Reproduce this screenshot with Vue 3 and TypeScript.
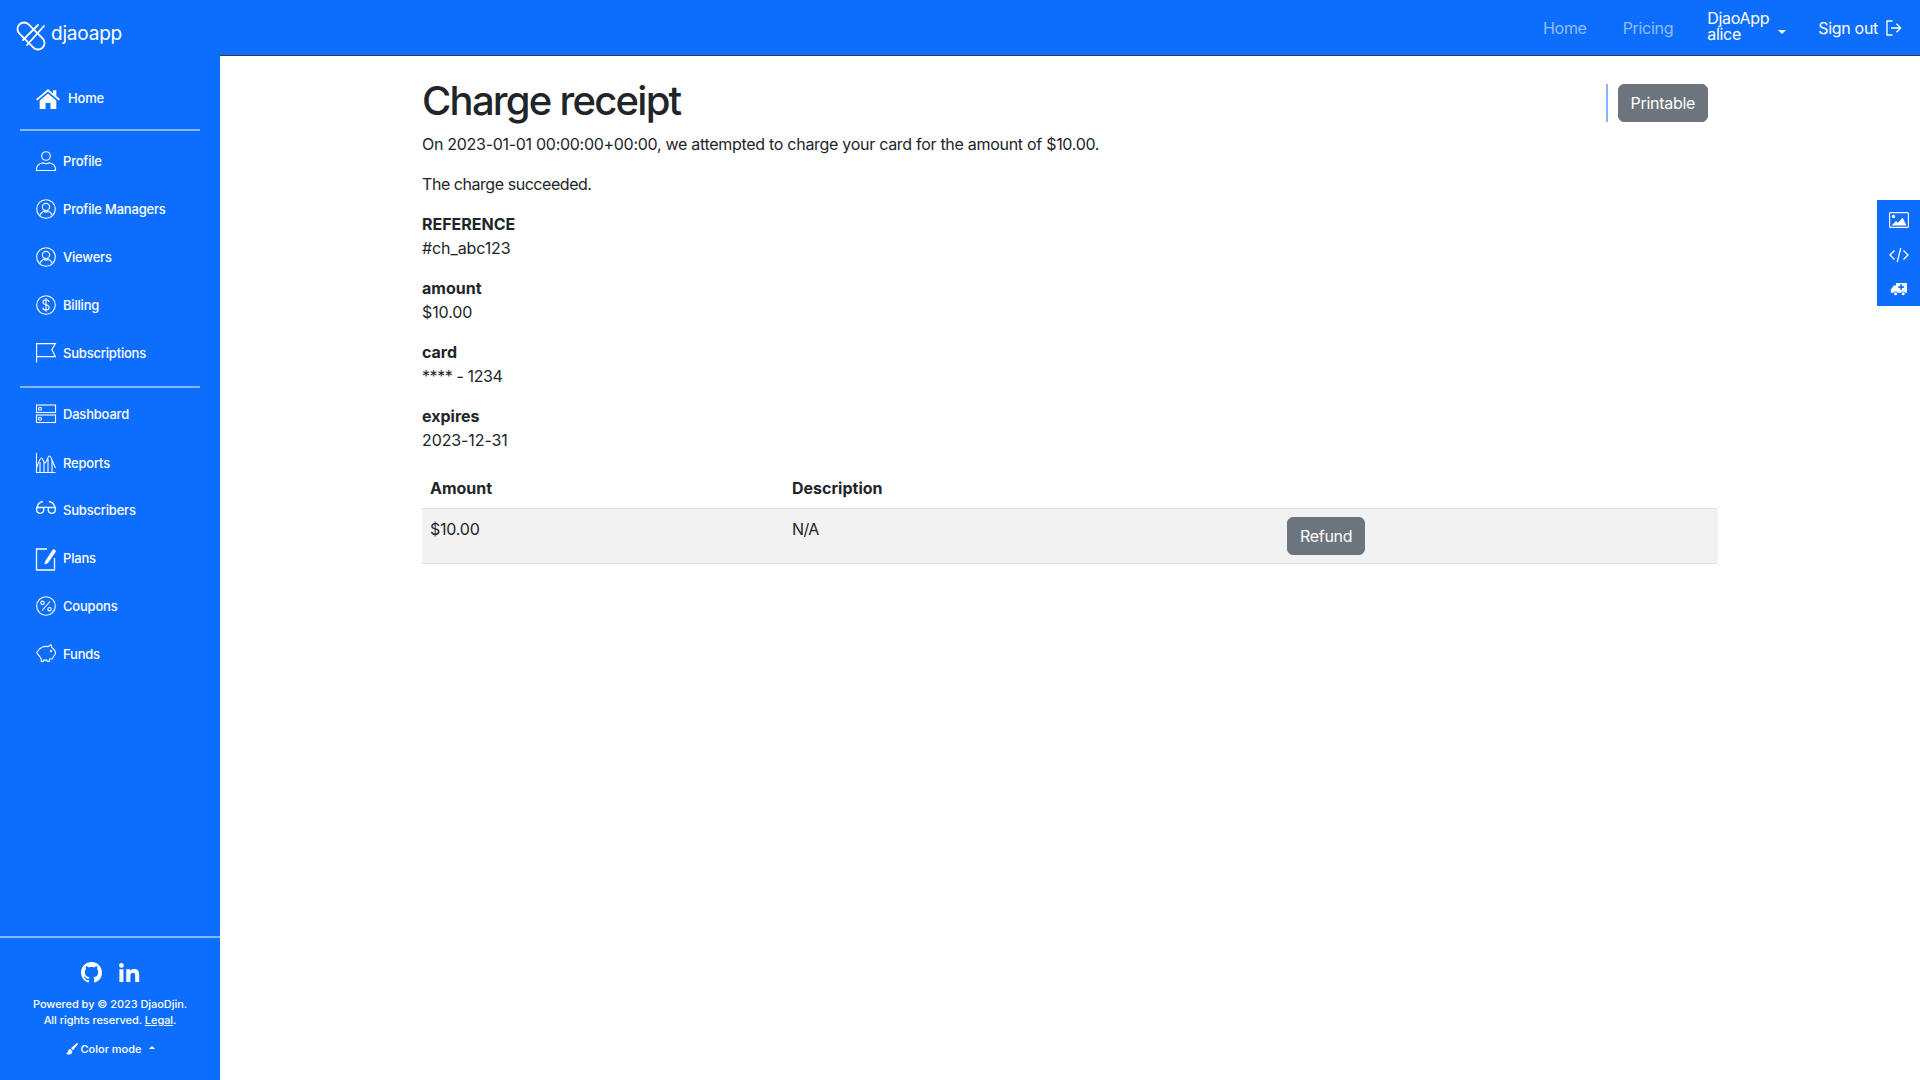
<script setup lang="ts">
interface NavItem { label: string; icon: string; cls?: string }
const primary: NavItem[] = [
  { label: 'Profile', icon: 'person' },
  { label: 'Profile Managers', icon: 'personc' },
  { label: 'Viewers', icon: 'personc' },
  { label: 'Billing', icon: 'dollar' },
  { label: 'Subscriptions', icon: 'flag' },
]
const secondary: NavItem[] = [
  { label: 'Dashboard', icon: 'hdd', cls: 'h-dash' },
  { label: 'Reports', icon: 'graph', cls: 'h-rep' },
  { label: 'Subscribers', icon: 'glasses', cls: 'h-sub' },
  { label: 'Plans', icon: 'plan' },
  { label: 'Coupons', icon: 'percent' },
  { label: 'Funds', icon: 'piggy' },
]
const details = [
  { term: 'REFERENCE', value: '#ch_abc123', cls: '' },
  { term: 'amount', value: '$10.00', cls: '' },
  { term: 'card', value: '**** - 1234', cls: 'tight' },
  { term: 'expires', value: '2023-12-31', cls: '' },
]
</script>

<template>
  <div class="app">
    <aside class="side">
      <a class="brand">
        <svg class="logo" viewBox="0 0 30 32" fill="none" stroke="#fff" stroke-width="1.800" stroke-linecap="round">
          <path d="M12.600 4.400 26.600 18.400A6.500 6.500 0 0 1 17.400 27.600L3.400 13.600A6.500 6.500 0 0 1 12.600 4.400Z"/>
          <path d="M28 6 11 25M22 5 7 20"/>
        </svg>
        <span>djaoapp</span>
      </a>
      <nav class="nav">
        <a class="item home">
          <svg class="ico-home" viewBox="0 0 24 20" fill="#fff"><path d="M12 0 0 10.200l1.200 1.400L12 2.600l10.800 9 1.200-1.400-3.700-3.100V1.200h-3.200v3.200L12 0Z"/><path d="M12 4.600 3.700 11.500V20h5.800v-6h5v6h5.800v-8.500L12 4.600Z"/></svg>
          <span>Home</span>
        </a>
        <div class="rule"></div>
        <a v-for="n in primary" :key="n.label" class="item">
          <svg class="ico" viewBox="0 0 20 20" fill="none" stroke="#fff" stroke-width="1.100">
            <template v-if="n.icon === 'person'">
              <circle cx="10" cy="5" r="4.300"/><path d="M.5 19v-1.500C1 14.500 4 12.500 6.500 11.800 8 13 12 13 13.500 11.800 16 12.500 19 14.500 19.500 17.500V19.500H.5Z"/>
            </template>
            <template v-else-if="n.icon === 'personc'">
              <circle cx="10" cy="10" r="9.300"/><circle cx="10" cy="8" r="3.600"/><path d="M3.800 16.500c.8-2.500 3-3.800 3.800-4.200 1.500 1 3.300 1 4.800 0 1 .4 3 1.700 3.800 4.200"/>
            </template>
            <template v-else-if="n.icon === 'dollar'">
              <circle cx="10" cy="10" r="9.300"/><path d="M13 7c-.2-1.500-1.400-2.200-3-2.200-1.800 0-3 1-3 2.400 0 3.300 6.200 1.900 6.200 5.300 0 1.500-1.300 2.500-3.200 2.500-1.800 0-3.100-.9-3.300-2.400M10 3.200v13.600"/>
            </template>
            <template v-else>
              <path d="M.6 19.500V.6h18.800l-3.600 6 3.600 7H.6"/>
            </template>
          </svg>
          <span>{{ n.label }}</span>
        </a>
        <div class="rule second"></div>
        <a v-for="n in secondary" :key="n.label" class="item" :class="n.cls">
          <svg class="ico" viewBox="0 0 20 20" fill="none" stroke="#fff" stroke-width="1.100">
            <template v-if="n.icon === 'hdd'">
              <rect x=".5" y="1" width="19" height="7.500"/><rect x=".5" y="11" width="19" height="7.500"/><circle cx="4" cy="4.700" r="1.500"/><circle cx="4" cy="14.700" r="1.500"/>
            </template>
            <template v-else-if="n.icon === 'graph'">
              <path d="M.5 0v19.500h19M.5 15c2-6 3.500-10 5-10 1.500 0 2 5 3.500 5s2.500-7 4.500-7 3.500 8 6 12M4 9v10M8 9v10M12 6v13M16 7v12"/>
            </template>
            <template v-else-if="n.icon === 'glasses'">
              <path d="M.8 8C1.800 4 3.500 2 7 1.500M19.200 8C18.200 4 16.500 2 13 1.500" stroke-width="1.300"/><path d="M.8 7.500h6.700c.8 4-.5 5.800-3.400 5.800S.4 11.500.8 7.500ZM19.200 7.500h-6.800c-.8 4 .6 5.800 3.500 5.800s3.700-1.800 3.300-5.800ZM7.500 8c1.500-1 3.500-1 5 0" stroke-width="1.300"/>
            </template>
            <template v-else-if="n.icon === 'plan'">
              <path d="M11 1H.5v21h18V10" stroke-width="1.300"/>
              <path d="M9 13.500 16.500 2c.7-1 1.900-.8 2.700-.1.700.6.800 1.500.2 2.300L12 15l-3.500 1.500.5-3Z" fill="#fff" stroke="none"/>
            </template>
            <template v-else-if="n.icon === 'percent'">
              <circle cx="10" cy="10" r="9.300"/><path d="M14 5.500 6 14.500"/><circle cx="6.500" cy="6.800" r="1.700"/><circle cx="13.500" cy="13.200" r="1.700"/>
            </template>
            <template v-else>
              <path d="M.6 8.500 3.500 5C6 2.500 9 2 12 2.600L15 .6l.8 3c1.800 1 3 2.600 3.600 4.400.4 1.500-.2 3-1.300 3.800L16 15h-2.500l-.3 2.500h-2l-.3-1.500c-1.300.2-2 .2-3.300 0l-.3 1.500h-2L5.300 15 3.500 12.300.6 8.500Z"/><circle cx="15" cy="7" r=".6"/>
            </template>
          </svg>
          <span>{{ n.label }}</span>
        </a>
      </nav>
      <footer class="foot">
        <div class="social">
          <svg class="gh" viewBox="0 0 16 16" fill="#fff"><path d="M8 0C3.580 0 0 3.580 0 8c0 3.540 2.290 6.530 5.470 7.590.4.070.55-.17.55-.38 0-.19-.01-.82-.01-1.490-2.010.37-2.530-.49-2.690-.94-.09-.23-.48-.94-.82-1.130-.28-.15-.68-.52-.01-.53.63-.01 1.080.58 1.230.82.72 1.210 1.870.87 2.330.66.070-.52.28-.87.51-1.070-1.780-.2-3.640-.89-3.640-3.950 0-.87.31-1.590.82-2.150-.08-.2-.36-1.020.08-2.120 0 0 .67-.21 2.200.82.64-.18 1.320-.27 2-.27.68 0 1.360.09 2 .27 1.530-1.040 2.200-.82 2.200-.82.44 1.100.16 1.920.08 2.120.51.56.82 1.270.82 2.150 0 3.070-1.870 3.750-3.650 3.950.29.25.54.73.54 1.480 0 1.070-.01 1.930-.01 2.200 0 .21.15.46.55.38A8.012 8.012 0 0 0 16 8c0-4.420-3.580-8-8-8z"/></svg>
          <svg class="li" viewBox="0 0 22 20" fill="#fff"><circle cx="2.500" cy="2.500" r="2.500"/><rect x=".4" y="6.600" width="4.200" height="13.400"/><path d="M7.600 6.600h4v1.900c.7-1.200 2.200-2.200 4.300-2.200 4.400 0 5.300 2.800 5.300 6.600V20H17v-6.300c0-1.600 0-3.500-2.200-3.500s-2.900 1.700-2.900 3.400V20H7.600V6.600Z"/></svg>
        </div>
        <p class="powered">Powered by © 2023 DjaoDjin.<br>All rights reserved. <a class="legal">Legal</a>.</p>
        <div class="mode">
          <svg class="brush" viewBox="0 0 12 12" fill="#fff"><path d="M11.800.2c-.4-.4-1-.2-1.500.2L5 5.200 7 7.200l4.500-5.500c.4-.5.600-1.100.3-1.500ZM4.300 6C2.800 6 2.200 7 2 8.200 1.800 9.500 1 10 0 10c1 1.500 3 2 4.500 1.300C6 10.500 6.500 9.300 6.300 8L4.300 6Z"/></svg>
          <span>Color mode</span>
          <i class="caret-up"></i>
        </div>
      </footer>
    </aside>

    <div class="right">
      <header class="top">
        <a class="tlink muted">Home</a>
        <a class="tlink muted">Pricing</a>
        <a class="user"><span class="who">DjaoApp<br>alice</span><i class="caret"></i></a>
        <a class="signout">
          <span>Sign out</span>
          <svg class="out" viewBox="0 0 16 16" fill="none" stroke="#fff" stroke-width="1.300"><path d="M6.500 1H1v14h5.500M5 8h9.500M10.500 3.800 14.700 8l-4.200 4.200"/></svg>
        </a>
      </header>

      <main class="main">
        <div class="actions">
          <button class="btn">Printable</button>
        </div>
        <h1>Charge receipt</h1>
        <p class="lead">On 2023-01-01 00:00:00+00:00, we attempted to charge your card for the amount of $10.00.</p>
        <p class="status">The charge succeeded.</p>
        <dl v-for="d in details" :key="d.term">
          <dt>{{ d.term }}</dt>
          <dd :class="d.cls">{{ d.value }}</dd>
        </dl>
        <table>
          <colgroup><col class="c1"><col class="c2"><col></colgroup>
          <thead><tr><th>Amount</th><th>Description</th><th></th></tr></thead>
          <tbody><tr><td>$10.00</td><td class="na">N/A</td><td><button class="btn">Refund</button></td></tr></tbody>
        </table>
      </main>
    </div>

    <div class="dock">
      <svg viewBox="0 0 20 16" fill="none" stroke="#fff" stroke-width="1.100"><rect x=".6" y=".6" width="18.800" height="14.800" rx="1"/><circle cx="4.500" cy="4.500" r="1.700" fill="#fff" stroke="none"/><path d="M2.500 13.500 7 9l2 1.800 4.500-5.300 4 8Z" fill="#fff" stroke="none"/></svg>
      <svg viewBox="0 0 20 16" fill="none" stroke="#fff" stroke-width="1.300"><path d="M5.500 3.500 1 8l4.500 4.500M14.500 3.500 19 8l-4.500 4.500M11.800 1 8.200 15"/></svg>
      <svg class="amb" viewBox="0 0 20 16" fill="#fff"><path d="M7 1h12a1 1 0 0 1 1 1v10.500h-2.200a2.500 2.500 0 0 0-4.600 0H8.800a2.500 2.500 0 0 0-4.600 0H1V8.500L4.500 4H7V1Zm5 1.500v2.200H9.800v2.100H12V9h2.100V6.800h2.200V4.700h-2.200V2.500H12Z" fill-rule="evenodd"/><circle cx="6.500" cy="13.500" r="1.800"/><circle cx="15.500" cy="13.500" r="1.800"/></svg>
    </div>
  </div>
</template>

<style scoped>
.app {
  display: flex;
  height: 1080px;
  overflow: hidden;
  font-family: Inter, "Liberation Sans", sans-serif;
  font-size: 16px;
  line-height: 24px;
  color: #212529;
  background: #fff;
  position: relative;
}
.side {
  width: 220px;
  flex: none;
  background: #0d6efd;
  color: #fff;
  display: flex;
  flex-direction: column;
}
.brand {
  height: 56px;
  flex: none;
  box-sizing: border-box;
  display: flex;
  align-items: center;
  gap: 5px;
  padding: 12px 0 0 16px;
  font-size: 19px;
  letter-spacing: -0.2px;
  color: #fff;
}
.logo { width: 30px; height: 32px; margin-top: 4px; }
.nav { padding: 18px 20px 0; flex: 1; }
.item {
  height: 48px;
  display: flex;
  align-items: center;
  padding-left: 16px;
  font-size: 13px;
  font-weight: 500;
  letter-spacing: -0.2px;
  color: #fff;
  gap: 7px;
}
.ico { width: 20px; height: 20px; flex: none; overflow: visible; }
.home { gap: 8px; }
.ico-home { width: 24px; height: 20px; margin-top: 2px; }
.rule { height: 2px; background: rgba(255, 255, 255, 0.5); margin: 7px 0 6px; }
.second { margin: 9px 0 2px; }
.h-rep { margin-top: 1px; }
.h-sub { margin-top: -1px; }
.foot {
  border-top: 2px solid rgba(255, 255, 255, 0.5);
  height: 144px;
  flex: none;
  text-align: center;
  padding-top: 23px;
  box-sizing: border-box;
}
.social { display: flex; justify-content: center; align-items: center; gap: 17px; height: 22px; }
.gh { width: 21px; height: 21px; }
.li { width: 21px; height: 19px; }
.powered { margin: 13px 0 0; font-size: 11px; line-height: 16px; font-weight: 500; letter-spacing: -0.05px; }
.legal { text-decoration: underline; }
.mode {
  margin-top: 13px;
  font-size: 11px;
  line-height: 16px;
  font-weight: 500;
  display: flex;
  justify-content: center;
  align-items: center;
  gap: 3px;
}
.brush { width: 12px; height: 12px; }
.caret-up {
  margin-left: 4px;
  width: 0;
  height: 0;
  border-left: 3px solid transparent;
  border-right: 3px solid transparent;
  border-bottom: 3px solid #fff;
  margin-top: -3px;
}
.right { flex: 1; min-width: 0; display: flex; flex-direction: column; }
.top {
  height: 56px;
  flex: none;
  box-sizing: border-box;
  background: #0d6efd;
  border-bottom: 1px solid #343a40;
  display: flex;
  align-items: center;
  justify-content: flex-end;
  color: #fff;
  padding-right: 18px;
  letter-spacing: -0.3px;
}
.tlink { margin-right: 36px; }
.tlink:nth-child(2) { margin-right: 34px; }
.muted { color: rgba(255, 255, 255, 0.55); }
.user { display: flex; align-items: center; line-height: 16px; margin-right: 32px; }
.who { margin-bottom: 4px; }
.caret {
  margin-left: 9px;
  margin-top: 9px;
  width: 0;
  height: 0;
  border-left: 4px solid transparent;
  border-right: 4px solid transparent;
  border-top: 4px solid #fff;
}
.signout { display: flex; align-items: center; gap: 8px; }
.out { width: 16px; height: 16px; }
.main { position: relative; padding: 21px 202px 0; }
.actions {
  float: right;
  margin: 7px 10px 0 0;
  border-left: 2px solid #86b7fe;
  padding-left: 10px;
  height: 38px;
}
h1 { margin: 0 0 7px; font-size: 40px; line-height: 48px; font-weight: 500; letter-spacing: -1.75px; }
p { margin: 0 0 16px; }
.lead { letter-spacing: -0.29px; }
.status { letter-spacing: -0.45px; }
dl { margin: 0 0 16px; }
dt { font-weight: 700; }
dd { margin: 0; letter-spacing: -0.1px; }
dd.tight { letter-spacing: -0.4px; }
.btn {
  font: inherit;
  height: 38px;
  padding: 0 12px;
  color: #fff;
  background: #6c757d;
  border: 1px solid #6c757d;
  border-radius: 6px;
  display: block;
  letter-spacing: -0.3px;
}
table { width: 100%; border-collapse: collapse; table-layout: fixed; }
.c1 { width: 362px; }
.c2 { width: 495px; }
th { text-align: left; padding: 8px; font-weight: 700; border-bottom: 1px solid #dee2e6; height: 24px; }
td { padding: 8px; vertical-align: top; background: #f2f2f2; border-bottom: 1px solid #dee2e6; letter-spacing: -0.2px; }
td.na { letter-spacing: -0.6px; }
.dock {
  position: absolute;
  right: 0;
  top: 200px;
  width: 43px;
  height: 106px;
  background: #0d6efd;
  display: flex;
  flex-direction: column;
  align-items: center;
  padding-top: 12px;
  gap: 19px;
  box-sizing: border-box;
}
.dock svg { width: 20px; height: 16px; flex: none; }
.dock svg.amb { width: 17px; height: 14px; }
</style>
